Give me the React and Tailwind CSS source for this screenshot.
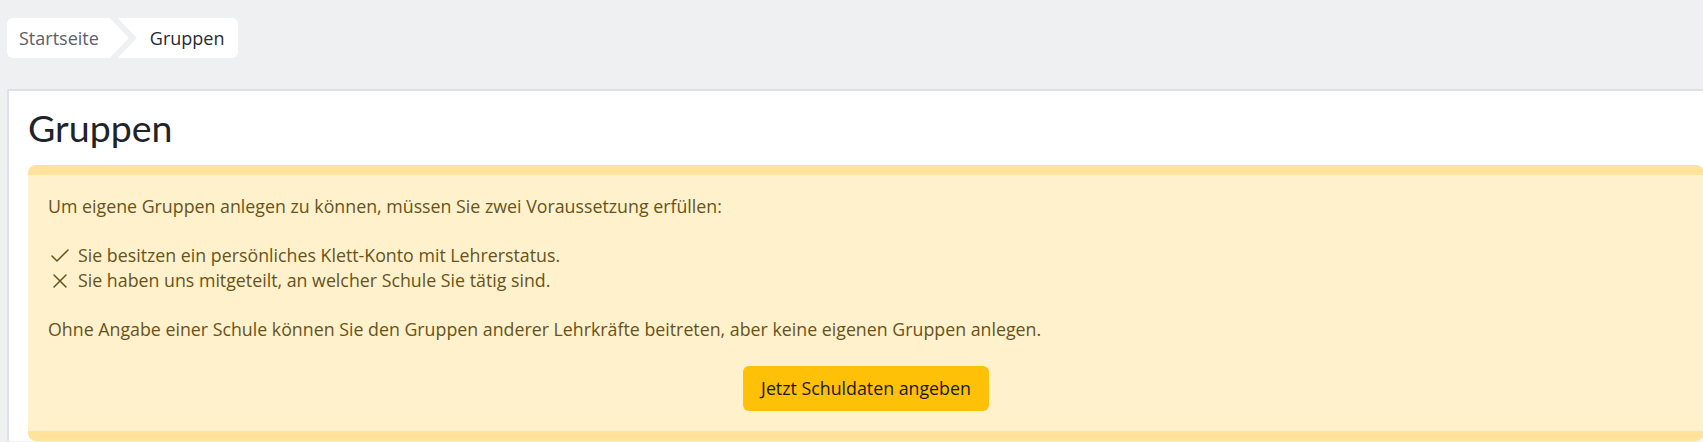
import { Check, X } from 'lucide-react';

const crumbs = [
  { label: 'Startseite', first: true },
  { label: 'Gruppen', first: false },
];

function Breadcrumb() {
  return (
    <nav className="flex h-10 text-[18px] font-['Open_Sans',sans-serif]">
      <a
        href="#"
        className="flex items-center bg-white pl-3 pr-[30px] rounded-l-md text-[#5b6068] [clip-path:polygon(0_0,calc(100%-19px)_0,100%_50%,calc(100%-19px)_100%,0_100%)]"
      >
        {crumbs[0].label}
      </a>
      <span className="-ml-[11px] flex items-center bg-white pl-[32px] pr-[14px] rounded-r-md text-[#262b33] [clip-path:polygon(0_0,100%_0,100%_100%,0_100%,19px_50%)]">
        {crumbs[1].label}
      </span>
    </nav>
  );
}

export default function App() {
  return (
    <div className="min-h-screen w-full overflow-hidden bg-[#eff0f2] pt-[18px] pl-[7px] font-['Open_Sans',sans-serif]">
      <Breadcrumb />

      {/* Panel */}
      <div className="mt-[31px] w-[1716px] shrink-0 bg-white border-t-2 border-l-2 border-[#dee1e5] px-[19px] pt-[13px]">
        <h1 className="font-['Lato',sans-serif] text-[37.5px] leading-[48px] text-[#1f232a] mb-[13px]">Gruppen</h1>

        <div className="rounded-lg border-y-[10px] border-[#ffe39b] bg-[#fff1cc] pl-5 pr-5 pt-[19px] pb-5 text-[17.8px] leading-[25px] text-[#67531a]">
          <p className="mb-6">Um eigene Gruppen anlegen zu können, müssen Sie zwei Voraussetzung erfüllen:</p>

          <ul className="mb-6">
            <li className="flex items-center gap-1.5">
              <Check size={24} strokeWidth={1.5} className="shrink-0" />
              Sie besitzen ein persönliches Klett-Konto mit Lehrerstatus.
            </li>
            <li className="flex items-center gap-1.5">
              <X size={24} strokeWidth={1.5} className="shrink-0" />
              Sie haben uns mitgeteilt, an welcher Schule Sie tätig sind.
            </li>
          </ul>

          <p className="mb-6">Ohne Angabe einer Schule können Sie den Gruppen anderer Lehrkräfte beitreten, aber keine eigenen Gruppen anlegen.</p>

          <div className="flex justify-center">
            <button className="h-[45px] rounded-md bg-[#ffc107] px-[18px] text-[17.8px] text-[#1a1a1a]">
              Jetzt Schuldaten angeben
            </button>
          </div>
        </div>
      </div>
    </div>
  );
}
